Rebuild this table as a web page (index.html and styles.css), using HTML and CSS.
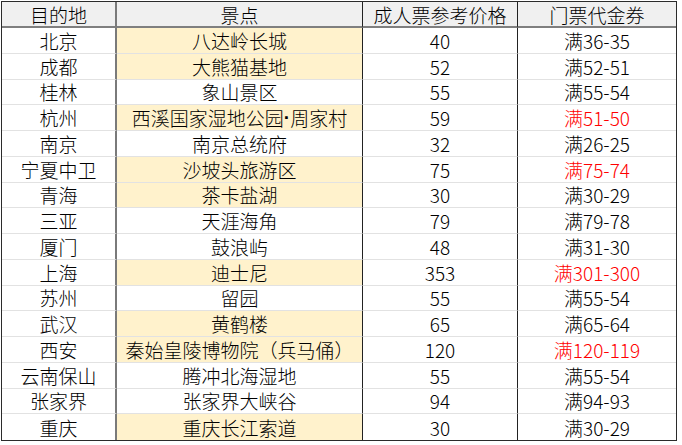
FILE: index.html
```html
<!DOCTYPE html>
<html lang="zh-CN">
<head>
<meta charset="utf-8">
<title>景点门票</title>
<link rel="stylesheet" href="styles.css">
</head>
<body>
<div class="sheet">
  <div class="cell head">目的地</div><div class="cell head">景点</div><div class="cell head">成人票参考价格</div><div class="cell head">门票代金券</div>

  <div class="cell">北京</div><div class="cell spot hl">八达岭长城</div><div class="cell num">40</div><div class="cell num">满36-35</div>
  <div class="cell">成都</div><div class="cell spot hl">大熊猫基地</div><div class="cell num">52</div><div class="cell num">满52-51</div>
  <div class="cell">桂林</div><div class="cell spot">象山景区</div><div class="cell num">55</div><div class="cell num">满55-54</div>
  <div class="cell">杭州</div><div class="cell spot hl">西溪国家湿地公园<span class="dot">·</span>周家村</div><div class="cell num">59</div><div class="cell num red">满51-50</div>
  <div class="cell">南京</div><div class="cell spot">南京总统府</div><div class="cell num">32</div><div class="cell num">满26-25</div>
  <div class="cell">宁夏中卫</div><div class="cell spot hl">沙坡头旅游区</div><div class="cell num">75</div><div class="cell num red">满75-74</div>
  <div class="cell">青海</div><div class="cell spot hl">茶卡盐湖</div><div class="cell num">30</div><div class="cell num">满30-29</div>
  <div class="cell">三亚</div><div class="cell spot">天涯海角</div><div class="cell num">79</div><div class="cell num">满79-78</div>
  <div class="cell">厦门</div><div class="cell spot">鼓浪屿</div><div class="cell num">48</div><div class="cell num">满31-30</div>
  <div class="cell">上海</div><div class="cell spot hl">迪士尼</div><div class="cell num">353</div><div class="cell num red">满301-300</div>
  <div class="cell">苏州</div><div class="cell spot">留园</div><div class="cell num">55</div><div class="cell num">满55-54</div>
  <div class="cell">武汉</div><div class="cell spot hl">黄鹤楼</div><div class="cell num">65</div><div class="cell num">满65-64</div>
  <div class="cell">西安</div><div class="cell spot hl">秦始皇陵博物院（兵马俑）</div><div class="cell num">120</div><div class="cell num red">满120-119</div>
  <div class="cell">云南保山</div><div class="cell spot">腾冲北海湿地</div><div class="cell num">55</div><div class="cell num">满55-54</div>
  <div class="cell">张家界</div><div class="cell spot">张家界大峡谷</div><div class="cell num">94</div><div class="cell num">满94-93</div>
  <div class="cell">重庆</div><div class="cell spot hl">重庆长江索道</div><div class="cell num">30</div><div class="cell num">满30-29</div>
</div>
</body>
</html>
```
FILE: styles.css
```css
html, body {
  margin: 0;
  padding: 0;
  background: #ffffff;
}

.sheet {
  margin: 1px 0 0 1px;
  width: 674px;
  display: grid;
  grid-template-columns: 115px 246px 155px 158px;
  grid-template-rows: 26px repeat(16, 25.75px);
  border: 1px solid #2b2b2b;
  font-family: "Noto Sans CJK SC", "Noto Sans", sans-serif;
  font-size: 19px;
  font-weight: 300;
  color: #000000;
}

.cell {
  display: flex;
  align-items: center;
  justify-content: center;
  white-space: nowrap;
  overflow: hidden;
  line-height: 1;
  border-bottom: 1px solid #e2e2e2;
  border-right: 1px solid #222;
  box-sizing: border-box;
}

.cell:nth-child(4n+1) {
  border-right: 2px solid #7a7a7a;
}

.cell:nth-child(4n) {
  border-right: none;
}

.head {
  background: #f0f0f0;
  border-bottom: 2px solid #7f7f7f;
}

.cell:nth-last-child(-n+4) {
  border-bottom: none;
}

.hl {
  background: #fff2cc;
}

.dot {
  font-family: "Liberation Sans", sans-serif;
  font-weight: 700;
}

.red {
  color: #ff0000;
}
```
